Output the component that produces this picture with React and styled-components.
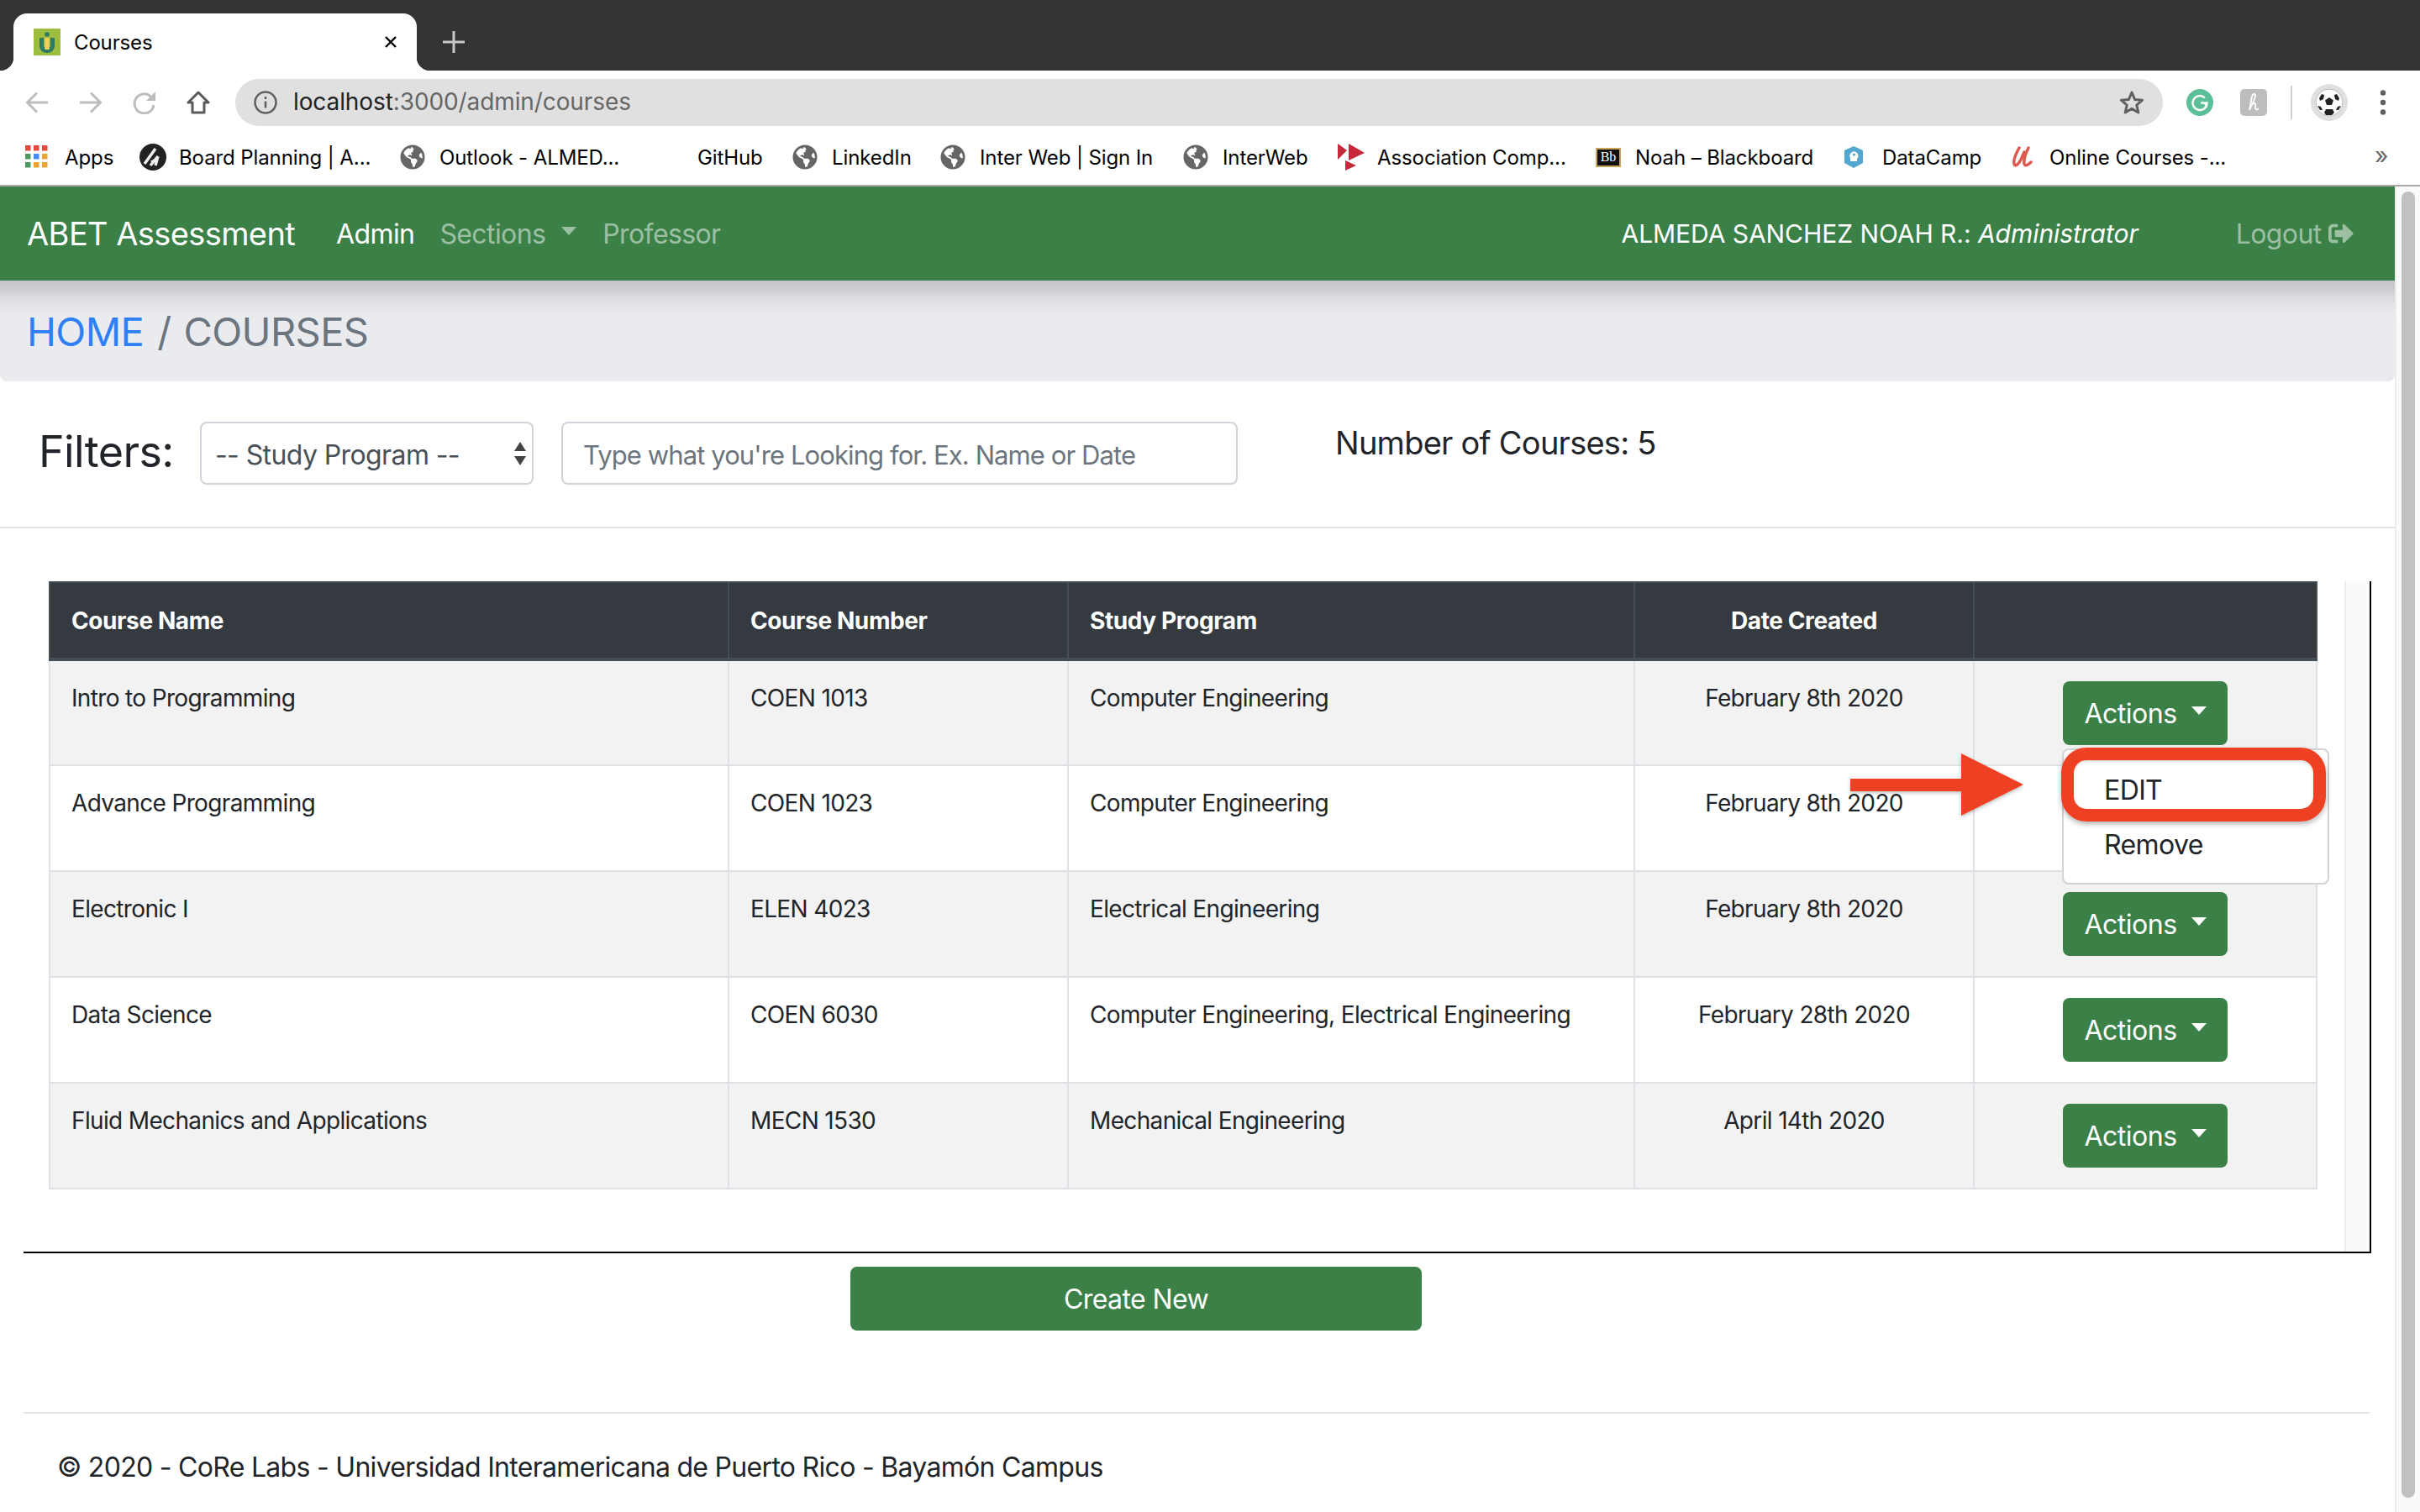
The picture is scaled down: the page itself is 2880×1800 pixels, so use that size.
import React from 'react';
import styled, { createGlobalStyle } from 'styled-components';
import { FaGlobeAmericas, FaSignOutAlt } from 'react-icons/fa';

const GlobalStyle = createGlobalStyle`
  html, body { margin: 0; padding: 0; background: #fff; }
  * { box-sizing: border-box; }
  body { font-family: Inter, "Liberation Sans", sans-serif; color: #212529; }
`;

const Page = styled.div`
  width: 2880px;
  height: 1800px;
  overflow: hidden;
  display: flex;
  flex-direction: column;
`;

/* browser chrome */
const TabStrip = styled.div`
  height: 84px;
  background: #333333;
  display: flex;
  align-items: flex-end;
  padding-left: 16px;
`;

const Tab = styled.div`
  position: relative;
  width: 480px;
  height: 68px;
  background: #fff;
  border-radius: 16px 16px 0 0;
  display: flex;
  align-items: center;
  padding: 0 24px;
  font-size: 24px;
  letter-spacing: -0.15px;
  color: #000;
  &::before, &::after {
    content: "";
    position: absolute;
    bottom: 0;
    width: 16px;
    height: 16px;
  }
  &::before { left: -16px; background: radial-gradient(circle at 0 0, #333 16px, #fff 16.5px); }
  &::after { right: -16px; background: radial-gradient(circle at 100% 0, #333 16px, #fff 16.5px); }
`;

const TabTitle = styled.span`
  margin-left: 16px;
  flex: 1;
`;

const NewTab = styled.div`
  width: 88px;
  height: 68px;
  display: flex;
  align-items: center;
  justify-content: center;
`;

const Toolbar = styled.div`
  height: 76px;
  display: flex;
  align-items: center;
  padding-left: 12px;
  background: #fff;
`;

const ToolSlot = styled.div`
  width: ${p => p.$w || 64}px;
  height: 60px;
  display: flex;
  align-items: center;
  justify-content: center;
`;

const AddressBar = styled.div`
  width: 2294px;
  height: 56px;
  margin: 0 12px;
  border-radius: 28px;
  background: #e0e0e0;
  display: flex;
  align-items: center;
  padding: 0 22px 0 22px;
  font-size: 28px;
  color: #666;
`;

const Url = styled.span`
  margin: 0 0 2px 19px;
  flex: 1;
  letter-spacing: -0.1px;
  b { font-weight: 400; color: #222; }
`;

const Separator = styled.div`
  width: 2px;
  height: 40px;
  margin-left: 12px;
  background: #d0d0d0;
`;

const BookmarkBar = styled.div`
  height: 62px;
  display: flex;
  align-items: flex-start;
  padding: 6px 0 0 30px;
  background: #fff;
  border-bottom: 2px solid #a9a9a9;
`;

const Bookmark = styled.div`
  width: ${p => p.$w}px;
  height: 42px;
  flex: none;
  display: flex;
  align-items: center;
  font-size: 24px;
  letter-spacing: -0.1px;
  color: #000;
  white-space: nowrap;
`;

const BookmarkIcon = styled.span`
  width: 47px;
  flex: none;
  display: flex;
  align-items: center;
  color: #666;
`;

const BbIcon = styled.span`
  width: 30px;
  height: 23px;
  display: flex;
  align-items: center;
  justify-content: center;
  background: #111;
  border: 2px solid #c9a558;
  color: #fff;
  font: 16px "Liberation Serif", serif;
`;

const More = styled.div`
  margin-left: auto;
  width: 54px;
  height: 42px;
  line-height: 38px;
  font-size: 28px;
  color: #666;
`;

/* page */
const Workspace = styled.div`
  flex: 1;
  display: flex;
  min-height: 0;
`;

const Main = styled.div`
  width: 2850px;
  flex: none;
`;

const PageScrollbar = styled.div`
  width: 30px;
  background: #fafafa;
  border-left: 2px solid #ececec;
  padding: 6px 0 0 6px;
`;

const PageThumb = styled.div`
  width: 16px;
  height: 1555px;
  border-radius: 8px;
  background: #c1c1c1;
`;

const Navbar = styled.nav`
  position: relative;
  z-index: 2;
  height: 112px;
  background: #3a8047;
  display: flex;
  align-items: center;
  padding: 0 49px 0 32px;
`;

const Brand = styled.a`
  font-size: 38px;
  color: #fff;
  width: 368px;
  flex: none;
  letter-spacing: -0.6px;
`;

const NavItem = styled.a`
  font-size: 32px;
  letter-spacing: -0.6px;
  color: ${p => (p.$active ? '#fff' : 'rgba(255,255,255,.5)')};
  margin-right: ${p => p.$mr || 0}px;
  display: flex;
  align-items: center;
`;

const Caret = styled.i`
  display: inline-block;
  margin-left: ${p => p.$ml || 19}px;
  margin-top: -6px;
  border-top: 10px solid currentColor;
  border-left: 9px solid transparent;
  border-right: 9px solid transparent;
`;

const UserName = styled.span`
  margin-left: auto;
  margin-right: 116px;
  font-size: 30px;
  color: #fff;
  letter-spacing: -0.05px;
  em { font-style: italic; }
`;

const Breadcrumb = styled.div`
  height: 120px;
  background: #e9ebef;
  border-radius: 0 0 8px 8px;
  box-shadow: inset 0 44px 30px -30px rgba(0,0,0,.2);
  display: flex;
  align-items: center;
  padding: 0 32px;
  font-size: 47px;
  color: #6c757d;
  letter-spacing: -0.6px;
  a { color: #2f80f6; }
`;

const Slash = styled.span`
  margin: 0 15px 0 16px;
`;

const FilterRow = styled.div`
  height: 175px;
  display: flex;
  align-items: flex-start;
  padding: 48px 0 0 46px;
  border-bottom: 2px solid #e5e5e5;
`;

const FilterLabel = styled.div`
  width: 192px;
  padding-top: 2px;
  font-size: 52px;
  line-height: 68px;
  letter-spacing: -0.6px;
  flex: none;
`;

const SelectBox = styled.div`
  position: relative;
  width: 397px;
  height: 75px;
  flex: none;
`;

const Select = styled.select`
  appearance: none;
  width: 100%;
  height: 100%;
  padding: 3px 0 0 16px;
  border: 2px solid #ced4da;
  border-radius: 8px;
  background: #fff;
  color: #495057;
  font: 32px Inter, sans-serif;
  letter-spacing: -0.6px;
`;

const SelectArrows = styled.svg`
  position: absolute;
  right: 9px;
  top: 24px;
`;

const SearchInput = styled.input`
  width: 805px;
  height: 75px;
  margin-left: 33px;
  flex: none;
  padding: 4px 0 0 24px;
  border: 2px solid #ced4da;
  border-radius: 8px;
  font: 31px Inter, sans-serif;
  letter-spacing: -0.9px;
  &::placeholder { color: #6c757d; opacity: 1; }
`;

const CourseCount = styled.div`
  margin: 1px 0 0 116px;
  font-size: 38px;
  line-height: 48px;
  letter-spacing: -0.75px;
`;

const Scroller = styled.div`
  width: 2794px;
  height: 800px;
  margin: 63px 0 0 28px;
  padding-left: 30px;
  border-right: 2px solid #000;
  border-bottom: 2px solid #000;
  display: flex;
  justify-content: space-between;
  align-items: flex-start;
`;

const InnerScrollbar = styled.div`
  width: 30px;
  height: 100%;
  background: #fafafa;
  border-left: 2px solid #ececec;
`;

const Table = styled.table`
  width: 2698px;
  table-layout: fixed;
  border-collapse: collapse;
  font-size: 28px;
  letter-spacing: -0.65px;
`;

const Th = styled.th`
  height: 92px;
  padding: 0 25px;
  background: #343a40;
  color: #fff;
  font-weight: 700;
  font-size: 28px;
  letter-spacing: -0.4px;
  text-align: ${p => (p.$center ? 'center' : 'left')};
  border: 2px solid #454d55;
  border-bottom-width: 4px;
`;

const Tr = styled.tr`
  height: 126px;
  background: ${p => (p.$odd ? '#f2f2f2' : '#fff')};
`;

const Td = styled.td`
  padding: 23px 25px 0;
  vertical-align: top;
  line-height: 42px;
  border: 2px solid #dee2e6;
  text-align: ${p => (p.$center ? 'center' : 'left')};
`;

const ActionsCell = styled(Td)`
  padding: 24px 24px 0;
  text-align: center;
`;

const ActionsWrap = styled.div`
  position: relative;
  display: inline-block;
  vertical-align: top;
`;

const ActionsButton = styled.button`
  width: 196px;
  height: 76px;
  display: flex;
  align-items: center;
  justify-content: center;
  padding: 0;
  border: 0;
  border-radius: 8px;
  background: #3a8047;
  color: #fff;
  font: 32px Inter, sans-serif;
  letter-spacing: -0.5px;
  visibility: ${p => (p.$covered ? 'hidden' : 'visible')};
`;

const Menu = styled.div`
  position: absolute;
  z-index: 3;
  left: -1px;
  top: 80px;
  width: 318px;
  height: 162px;
  padding: 15px 0;
  background: #fff;
  border: 2px solid #d3d3d3;
  border-radius: 8px;
  text-align: left;
`;

const MenuItem = styled.div`
  height: 65px;
  line-height: 65px;
  padding-left: 48px;
  font-size: 32px;
  letter-spacing: -0.6px;
`;

const Highlight = styled.div`
  position: absolute;
  z-index: 4;
  left: -2px;
  top: 79px;
  width: 315px;
  height: 88px;
  border: 15px solid #ee4023;
  border-radius: 30px;
  box-shadow: 0 3px 6px rgba(0,0,0,.3), inset 0 2px 3px rgba(0,0,0,.15);
`;

const ArrowMark = styled.svg`
  position: absolute;
  z-index: 4;
  left: -253px;
  top: 86px;
  filter: drop-shadow(0 2px 2px rgba(0,0,0,.25));
`;

const CreateButton = styled.button`
  display: block;
  width: 680px;
  height: 76px;
  margin: 16px 0 0 1012px;
  border: 0;
  border-radius: 8px;
  background: #3a8047;
  color: #fff;
  font: 32px Inter, sans-serif;
  letter-spacing: -0.6px;
`;

const Footer = styled.footer`
  margin: 97px 30px 0 28px;
  padding: 44px 0 0 40px;
  border-top: 2px solid #e5e5e5;
  font-size: 32px;
  line-height: 40px;
  letter-spacing: -0.7px;
`;

/* drawings */
const Favicon = () => (
  <svg width="32" height="32" viewBox="0 0 32 32">
    <rect width="32" height="32" fill="#9dbd3f" />
    <circle cx="16" cy="7" r="2.8" fill="#2f7a63" />
    <path d="M7 11h5v9a4 4 0 0 0 8 0v-9h5v10a9 8 0 0 1-18 0z" fill="#2f7a63" />
    <rect x="13.500" y="11" width="5" height="14" fill="#f0cf5a" />
  </svg>
);

const CloseIcon = () => (
  <svg width="14" height="14" viewBox="0 0 14 14" stroke="#000" strokeWidth="2.400">
    <path d="M1 1l12 12M13 1L1 13" />
  </svg>
);

const PlusIcon = () => (
  <svg width="26" height="26" viewBox="0 0 26 26" stroke="#c8c8c8" strokeWidth="3">
    <path d="M13 0v26M0 13h26" />
  </svg>
);

const NavArrow = ({ flip }) => (
  <svg width="28" height="26" viewBox="0 0 28 26" fill="none" stroke="#bdbdbd" strokeWidth="3" style={flip ? { transform: 'scaleX(-1)' } : undefined}>
    <path d="M27 13H3M14 1.500L2.500 13 14 24.500" />
  </svg>
);

const ReloadIcon = () => (
  <svg width="28" height="28" viewBox="0 0 28 28">
    <path d="M21.500 7A11.500 11.500 0 1 0 25 17" fill="none" stroke="#bdbdbd" strokeWidth="3" />
    <path d="M27 1v11H16z" fill="#bdbdbd" />
  </svg>
);

const HomeIcon = () => (
  <svg width="28" height="28" viewBox="0 0 28 28" fill="none" stroke="#5a5a5a" strokeWidth="3" strokeLinejoin="round">
    <path d="M14 2L26 14h-5v12H7V14H2z" />
  </svg>
);

const InfoIcon = () => (
  <svg width="28" height="28" viewBox="0 0 28 28" fill="none" stroke="#5f5f5f" strokeWidth="2.500">
    <circle cx="14" cy="14" r="12.500" />
    <path d="M14 12.500v8M14 7v3" />
  </svg>
);

const StarIcon = () => (
  <svg width="30" height="30" viewBox="0 0 30 30" fill="none" stroke="#5f5f5f" strokeWidth="3" strokeLinejoin="round">
    <path d="M15 3l3.600 8.400 9 .8-6.800 6 2 8.800L15 22.400l-7.800 4.600 2-8.800-6.800-6 9-.8z" />
  </svg>
);

const GrammarlyIcon = () => (
  <svg width="32" height="32" viewBox="0 0 32 32">
    <circle cx="16" cy="16" r="16" fill="#5bc09a" />
    <path d="M22 10.500A8.500 8.500 0 1 0 24.500 16.500H17" fill="none" stroke="#fff" strokeWidth="2.400" />
    <path d="M25 15v7l-4-4z" fill="#fff" />
  </svg>
);

const HoneyIcon = () => (
  <svg width="32" height="32" viewBox="0 0 32 32" fill="none">
    <rect width="32" height="32" rx="5" fill="#bdbdbd" />
    <path d="M11 25c2-5 7-13 7-17 0-3-3-3-4 1-1 5-2 11-3 16 1-4 3-8 6-8 2 0 1 3 1 5s2 4 4 1" stroke="#fff" strokeWidth="1.800" />
  </svg>
);

const SoccerAvatar = () => (
  <svg width="44" height="44" viewBox="0 0 44 44">
    <circle cx="22" cy="22" r="22" fill="#e0e0e0" />
    <circle cx="22" cy="22" r="16" fill="#fff" stroke="#bbb" />
    <path d="M22 16l5 3.500-2 5.500h-6l-2-5.500zM10 17l3-5 3 1-1 5-4 2zM34 17l-3-5-3 1 1 5 4 2zM16 34l2-4h8l2 4-3 3h-7zM8 26l4 1 2 4-3 0zM36 26l-4 1-2 4 3 0z" fill="#222" />
  </svg>
);

const MenuDots = () => (
  <svg width="8" height="30" viewBox="0 0 8 30" fill="#5f5f5f">
    <circle cx="4" cy="3.500" r="3.200" />
    <circle cx="4" cy="15" r="3.200" />
    <circle cx="4" cy="26.500" r="3.200" />
  </svg>
);

const AppsGrid = () => (
  <svg width="28" height="28" viewBox="0 0 28 28">
    {[['#e5483c', '#e5483c', '#e5483c'], ['#4f9a62', '#4a8df0', '#e8a534'], ['#4f9a62', '#e8a534', '#e8a534']].map((row, y) =>
      row.map((c, x) => <rect key={x + '-' + y} x={x * 10} y={y * 10} width="6.500" height="6.500" fill={c} />)
    )}
  </svg>
);

const BoardIcon = () => (
  <svg width="32" height="32" viewBox="0 0 32 32">
    <circle cx="16" cy="16" r="16" fill="#222" />
    <path d="M6 24L19 6M13 26l9-11M22 15l-3 11M14 22l8-4" stroke="#eee" strokeWidth="3.500" fill="none" />
  </svg>
);

const Globe = () => <FaGlobeAmericas size={30} color="#666" />;

const AssocIcon = () => (
  <svg width="32" height="32" viewBox="0 0 32 32" fill="#c7283a">
    <path d="M0 0l11 8L0 19zM13 0l19 11-19 9zM9 20l13 6-13 6z" />
  </svg>
);

const DataCampIcon = () => (
  <svg width="26" height="26" viewBox="0 0 26 26">
    <path d="M13 0l11 5v15l-11 6-11-6V5z" fill="#52a6cf" />
    <path d="M9 18v-4a5 5 0 1 1 8 1v3z" fill="#fff" />
    <circle cx="13.500" cy="10" r="1.600" fill="#52a6cf" />
  </svg>
);

const UdemyIcon = () => (
  <svg width="30" height="26" viewBox="0 0 30 26" fill="none" stroke="#dc5a52" strokeWidth="3.500" strokeLinecap="round">
    <path d="M11 2C7 9 4 16 5 21c1 4 5 1 8-5l4-9M22 2c-3 6-6 14-5 19 1 3 4 2 8-2" />
  </svg>
);

const courses = [
  { name: 'Intro to Programming', number: 'COEN 1013', program: 'Computer Engineering', date: 'February 8th 2020' },
  { name: 'Advance Programming', number: 'COEN 1023', program: 'Computer Engineering', date: 'February 8th 2020' },
  { name: 'Electronic I', number: 'ELEN 4023', program: 'Electrical Engineering', date: 'February 8th 2020' },
  { name: 'Data Science', number: 'COEN 6030', program: 'Computer Engineering, Electrical Engineering', date: 'February 28th 2020' },
  { name: 'Fluid Mechanics and Applications', number: 'MECN 1530', program: 'Mechanical Engineering', date: 'April 14th 2020' },
];

const bookmarks = [
  { w: 136, icon: <AppsGrid />, label: 'Apps' },
  { w: 310, icon: <BoardIcon />, label: 'Board Planning | A...' },
  { w: 354, icon: <Globe />, label: 'Outlook - ALMED...' },
  { w: 113, label: 'GitHub' },
  { w: 176, icon: <Globe />, label: 'LinkedIn' },
  { w: 289, icon: <Globe />, label: 'Inter Web | Sign In' },
  { w: 184, icon: <Globe />, label: 'InterWeb' },
  { w: 307, icon: <AssocIcon />, label: 'Association Comp...' },
  { w: 294, icon: <BbIcon>Bb</BbIcon>, label: 'Noah – Blackboard' },
  { w: 199, icon: <DataCampIcon />, label: 'DataCamp' },
  { w: 260, icon: <UdemyIcon />, label: 'Online Courses -...' },
];

function App() {
  return (
    <Page>
      <GlobalStyle />
      <TabStrip>
        <Tab>
          <Favicon />
          <TabTitle>Courses</TabTitle>
          <CloseIcon />
        </Tab>
        <NewTab><PlusIcon /></NewTab>
      </TabStrip>
      <Toolbar>
        <ToolSlot><NavArrow /></ToolSlot>
        <ToolSlot><NavArrow flip /></ToolSlot>
        <ToolSlot><ReloadIcon /></ToolSlot>
        <ToolSlot><HomeIcon /></ToolSlot>
        <AddressBar>
          <InfoIcon />
          <Url><b>localhost</b>:3000/admin/courses</Url>
          <StarIcon />
        </AddressBar>
        <ToolSlot><GrammarlyIcon /></ToolSlot>
        <ToolSlot><HoneyIcon /></ToolSlot>
        <Separator />
        <ToolSlot $w={88}><SoccerAvatar /></ToolSlot>
        <ToolSlot $w={40}><MenuDots /></ToolSlot>
      </Toolbar>
      <BookmarkBar>
        {bookmarks.map(b => (
          <Bookmark key={b.label} $w={b.w}>
            {b.icon && <BookmarkIcon>{b.icon}</BookmarkIcon>}
            {b.label}
          </Bookmark>
        ))}
        <More>»</More>
      </BookmarkBar>
      <Workspace>
        <Main>
          <Navbar>
            <Brand>ABET Assessment</Brand>
            <NavItem $active $mr={30}>Admin</NavItem>
            <NavItem $mr={31}>Sections<Caret /></NavItem>
            <NavItem>Professor</NavItem>
            <UserName>ALMEDA SANCHEZ NOAH R.: <em>Administrator</em></UserName>
            <NavItem>Logout&nbsp;<FaSignOutAlt size={30} /></NavItem>
          </Navbar>
          <Breadcrumb>
            <a>HOME</a>
            <Slash>/</Slash>
            <span>COURSES</span>
          </Breadcrumb>
          <FilterRow>
            <FilterLabel>Filters:</FilterLabel>
            <SelectBox>
              <Select defaultValue="">
                <option value="">-- Study Program --</option>
              </Select>
              <SelectArrows width="14" height="28" viewBox="0 0 14 28" fill="#444">
                <path d="M7 0l7 11H0zM7 28l7-11H0z" />
              </SelectArrows>
            </SelectBox>
            <SearchInput placeholder="Type what you're Looking for. Ex. Name or Date" />
            <CourseCount>Number of Courses: 5</CourseCount>
          </FilterRow>
          <Scroller>
            <Table>
              <colgroup>
                <col width="808" />
                <col width="404" />
                <col width="674" />
                <col width="404" />
                <col width="408" />
              </colgroup>
              <thead>
                <tr>
                  <Th>Course Name</Th>
                  <Th>Course Number</Th>
                  <Th>Study Program</Th>
                  <Th $center>Date Created</Th>
                  <Th />
                </tr>
              </thead>
              <tbody>
                {courses.map((c, i) => (
                  <Tr key={c.number} $odd={i % 2 === 0}>
                    <Td>{c.name}</Td>
                    <Td>{c.number}</Td>
                    <Td>{c.program}</Td>
                    <Td $center>{c.date}</Td>
                    <ActionsCell>
                      <ActionsWrap>
                        <ActionsButton $covered={i === 1}>Actions<Caret $ml={17} /></ActionsButton>
                        {i === 0 && (
                          <>
                            <Menu>
                              <MenuItem>EDIT</MenuItem>
                              <MenuItem>Remove</MenuItem>
                            </Menu>
                            <Highlight />
                            <ArrowMark width="206" height="74" viewBox="0 0 206 74" fill="#ee4023">
                              <path d="M0 30h132V0l74 37-74 37V45H0z" />
                            </ArrowMark>
                          </>
                        )}
                      </ActionsWrap>
                    </ActionsCell>
                  </Tr>
                ))}
              </tbody>
            </Table>
            <InnerScrollbar />
          </Scroller>
          <CreateButton>Create New</CreateButton>
          <Footer>© 2020 - CoRe Labs - Universidad Interamericana de Puerto Rico - Bayamón Campus</Footer>
        </Main>
        <PageScrollbar><PageThumb /></PageScrollbar>
      </Workspace>
    </Page>
  );
}

export default App;
